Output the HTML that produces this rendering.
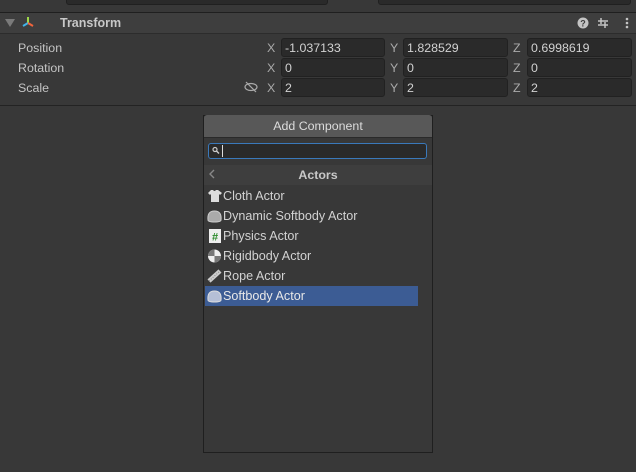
<!DOCTYPE html>
<html><head><style>
*{box-sizing:border-box;margin:0;padding:0}
body{width:636px;height:472px;background:#383838;font-family:"Liberation Sans","DejaVu Sans",sans-serif;font-size:12.4px;color:#c4c4c4;position:relative;overflow:hidden}
.a{position:absolute}
.f{position:absolute;background:#2a2a2a;border:1px solid #212121;border-radius:3px;height:19px;padding-left:3px;line-height:18px;color:#d2d2d2}
.l{position:absolute;line-height:20px}
.it{position:absolute;left:205px;width:213px;height:20px;line-height:21px;padding-left:18px;color:#d2d2d2;font-size:12.6px}
.ic{position:absolute;left:2px;top:3px;width:15px;height:14px}
</style></head><body>
<div class="a" style="left:66px;top:-5px;width:262px;height:10px;background:#2a2a2a;border:1px solid #202020;border-radius:3px"></div>
<div class="a" style="left:378px;top:-5px;width:253px;height:10px;background:#2a2a2a;border:1px solid #202020;border-radius:3px"></div>
<div class="a" style="left:0;top:12px;width:636px;height:1px;background:#1f1f1f"></div>
<div class="a" style="left:0;top:13px;width:636px;height:21px;background:#3e3e3e"></div>
<div class="a" style="left:0;top:33px;width:636px;height:1px;background:#2c2c2c"></div>
<div class="a" style="left:5px;top:19px;width:0;height:0;border-left:5px solid transparent;border-right:5px solid transparent;border-top:8px solid #7a7a7a"></div>
<svg class="a" style="left:20px;top:15px" width="16" height="15" viewBox="0 0 16 15"><path d="M8 2v6" stroke="#9ed94a" stroke-width="2"/><path d="M8 8l-5 3" stroke="#3fb3e8" stroke-width="2"/><path d="M8 8l5 3" stroke="#f0643c" stroke-width="2"/></svg>
<div class="a" style="left:60px;top:16px;font-weight:bold;font-size:12.5px;color:#c8c8c8">Transform</div>
<svg class="a" style="left:577px;top:17px" width="12" height="12"><circle cx="6" cy="6" r="5.5" fill="#c4c4c4"/><text x="6" y="9.5" font-size="9" font-weight="bold" text-anchor="middle" fill="#3e3e3e" font-family="Liberation Sans">?</text></svg>
<svg class="a" style="left:597px;top:17px" width="12" height="12"><path d="M1 4h10M1 8h10M4 1v6M8 5v6" stroke="#c4c4c4" stroke-width="1.5"/></svg>
<svg class="a" style="left:625px;top:17px" width="4" height="12"><circle cx="2" cy="2" r="1.3" fill="#c4c4c4"/><circle cx="2" cy="6" r="1.3" fill="#c4c4c4"/><circle cx="2" cy="10" r="1.3" fill="#c4c4c4"/></svg>

<div class="l" style="left:18px;top:38px">Position</div>
<div class="l" style="left:18px;top:58px">Rotation</div>
<div class="l" style="left:18px;top:78px">Scale</div>
<svg class="a" style="left:244px;top:81px" width="14" height="12"><ellipse cx="7" cy="6" rx="6" ry="3.5" fill="none" stroke="#aaa" stroke-width="1.2"/><path d="M2 1l10 10" stroke="#aaa" stroke-width="1.2"/></svg>

<div class="l" style="left:267px;top:38px;color:#aaa">X</div><div class="f" style="left:281px;top:38px;width:104px">-1.037133</div>
<div class="l" style="left:390px;top:38px;color:#aaa">Y</div><div class="f" style="left:403px;top:38px;width:105px">1.828529</div>
<div class="l" style="left:513px;top:38px;color:#aaa">Z</div><div class="f" style="left:527px;top:38px;width:105px">0.6998619</div>
<div class="l" style="left:267px;top:58px;color:#aaa">X</div><div class="f" style="left:281px;top:58px;width:104px">0</div>
<div class="l" style="left:390px;top:58px;color:#aaa">Y</div><div class="f" style="left:403px;top:58px;width:105px">0</div>
<div class="l" style="left:513px;top:58px;color:#aaa">Z</div><div class="f" style="left:527px;top:58px;width:105px">0</div>
<div class="l" style="left:267px;top:78px;color:#aaa">X</div><div class="f" style="left:281px;top:78px;width:104px">2</div>
<div class="l" style="left:390px;top:78px;color:#aaa">Y</div><div class="f" style="left:403px;top:78px;width:105px">2</div>
<div class="l" style="left:513px;top:78px;color:#aaa">Z</div><div class="f" style="left:527px;top:78px;width:105px">2</div>
<div class="a" style="left:0;top:105px;width:636px;height:1px;background:#232323"></div>

<div class="a" style="left:203px;top:115px;width:230px;height:338px;border:1px solid #1f1f1f;background:#383838"></div>
<div class="a" style="left:204px;top:115px;width:228px;height:22px;background:#585858;border-radius:3px 3px 0 0;text-align:center;line-height:22px;color:#dcdcdc">Add Component</div>
<div class="a" style="left:204px;top:137px;width:228px;height:1px;background:#2a2a2a"></div>
<div class="a" style="left:208px;top:143px;width:219px;height:16px;background:#2a2a2a;border:1px solid #3a79bb;border-radius:3px"></div>
<svg class="a" style="left:212px;top:146px" width="8" height="9"><circle cx="3" cy="3.5" r="2" fill="none" stroke="#ccc" stroke-width="1.2"/><path d="M4.5 5l2.5 2.5" stroke="#ccc" stroke-width="1.4"/></svg>
<div class="a" style="left:222px;top:145px;width:1px;height:12px;background:#ddd"></div>
<div class="a" style="left:204px;top:165px;width:228px;height:20px;background:#3e3e3e"></div>
<svg class="a" style="left:209px;top:169px" width="6" height="10"><path d="M5 1L1 5l4 4" fill="none" stroke="#888" stroke-width="1.4"/></svg>
<div class="a" style="left:204px;top:165px;width:228px;line-height:20px;text-align:center;font-weight:bold;color:#c8c8c8">Actors</div>

<div class="it" style="top:186px"><svg class="ic" viewBox="0 0 15 14"><path d="M4 1h2q1.5 2 3 0h2l4 3-2 2-1-1v8H4V5L3 6 1 4z" fill="#ddd"/></svg>Cloth Actor</div>
<div class="it" style="top:206px"><svg class="ic" viewBox="0 0 15 14"><path d="M1 11Q0 2 7.5 2T14 11Q14 13 7.5 13T1 11z" fill="#aaa" stroke="#ccc"/></svg>Dynamic Softbody Actor</div>
<div class="it" style="top:226px"><svg class="ic" viewBox="0 0 15 14"><rect x="2" y="0" width="12" height="14" fill="#eee"/><text x="8" y="11.5" font-size="11" font-weight="bold" text-anchor="middle" fill="#2a8a2a" font-family="Liberation Sans">#</text></svg>Physics Actor</div>
<div class="it" style="top:246px"><svg class="ic" viewBox="0 0 15 14"><circle cx="7.5" cy="7" r="6.5" fill="#eee"/><path d="M7.5 7V0.5A6.5 6.5 0 0 0 1 7z" fill="#777"/><path d="M7.5 7v6.5A6.5 6.5 0 0 0 14 7z" fill="#777"/></svg>Rigidbody Actor</div>
<div class="it" style="top:266px"><svg class="ic" viewBox="0 0 15 14"><path d="M2 12L13 2" stroke="#ccc" stroke-width="4.5"/><path d="M2 12L13 2" stroke="#888" stroke-width="1" stroke-dasharray="1 1.5"/></svg>Rope Actor</div>
<div class="it" style="top:286px;background:#3c5c94;color:#e8e8e8"><svg class="ic" viewBox="0 0 15 14"><path d="M1 11Q0 2 7.5 2T14 11Q14 13 7.5 13T1 11z" fill="#b5bfd6" stroke="#ddd"/></svg>Softbody Actor</div>
</body></html>
